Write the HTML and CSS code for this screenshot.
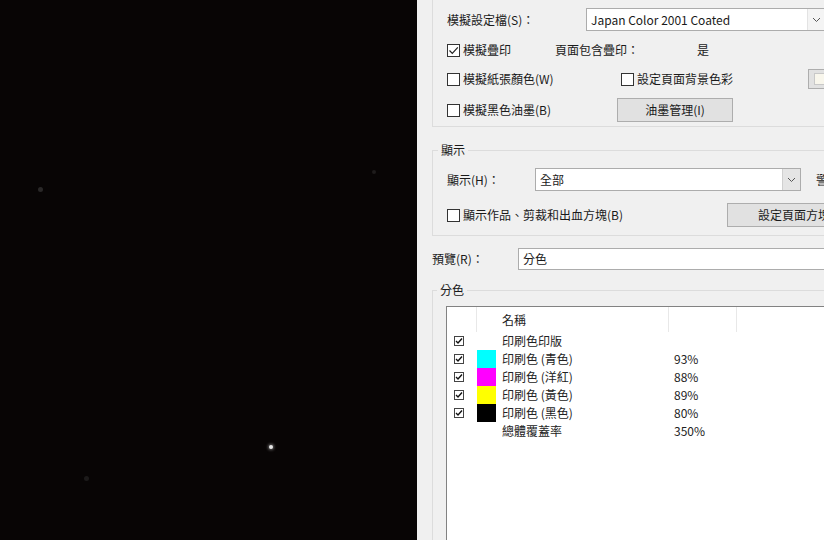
FILE: index.html
```html
<!doctype html>
<html>
  <head>
    <meta charset="utf-8">
    <title>校樣色彩</title>
    <link rel="stylesheet" href="styles.css">
  </head>
  <body>
    <div class="screen">
      <div class="night">
        <span class="star star-bright"></span>
        <span class="star star-a"></span>
        <span class="star star-b"></span>
        <span class="star star-c"></span>
      </div>

      <div class="panel">
        <fieldset class="group group-proof">
          <div class="row row-h23">
            <label class="lbl w139">模擬設定檔(S)：</label>
            <div class="combo combo-profile">
              <span class="combo-text">Japan Color 2001 Coated</span>
              <span class="combo-arrow">
                <svg width="9" height="6" viewBox="0 0 9 6"><path d="M1 1l3.5 3.5L8 1" fill="none" stroke="#555"/></svg>
              </span>
            </div>
          </div>
          <div class="row row-h24 mt7">
            <div class="opt w108">
              <span class="check">
                <svg width="11" height="11" viewBox="0 0 11 11"><path d="M1.5 5.5l2.8 2.8L9.8 2.3" fill="none" stroke="#222" stroke-width="1.2"/></svg>
              </span>
              <span>模擬疊印</span>
            </div>
            <span class="lbl w142">頁面包含疊印：</span>
            <span class="lbl">是</span>
          </div>
          <div class="row row-h24 mt5">
            <div class="opt w174"><span class="check"></span><span>模擬紙張顏色(W)</span></div>
            <div class="opt w187"><span class="check"></span><span>設定頁面背景色彩</span></div>
            <span class="swatch-btn"><span class="swatch-fill"></span></span>
          </div>
          <div class="row row-h24 mt7">
            <div class="opt w170"><span class="check"></span><span>模擬黑色油墨(B)</span></div>
            <button class="btn btn-ink" type="button">油墨管理(I)</button>
          </div>
        </fieldset>

        <fieldset class="group group-show">
          <legend>顯示</legend>
          <div class="row row-h23">
            <label class="lbl w88">顯示(H)：</label>
            <div class="combo combo-show">
              <span class="combo-text">全部</span>
              <span class="combo-arrow arrow-gray">
                <svg width="9" height="6" viewBox="0 0 9 6"><path d="M1 1l3.5 3.5L8 1" fill="none" stroke="#555"/></svg>
              </span>
            </div>
            <span class="lbl warn">警告</span>
          </div>
          <div class="row row-h24 mt12">
            <div class="opt w280"><span class="check"></span><span>顯示作品、剪裁和出血方塊(B)</span></div>
            <button class="btn btn-boxes" type="button">設定頁面方塊</button>
          </div>
        </fieldset>

        <div class="row row-h22 mt12 preview-row">
          <label class="lbl w86">預覽(R)：</label>
          <div class="combo combo-preview"><span class="combo-text">分色</span></div>
        </div>

        <fieldset class="group group-sep">
          <legend>分色</legend>
          <div class="list">
            <div class="list-head">
              <span class="cell sep"></span>
              <span class="cell"></span>
              <span class="cell name sep">名稱</span>
              <span class="cell sep"></span>
              <span class="cell"></span>
            </div>
            <div class="list-row">
              <span class="cell"><span class="mini-check"><svg width="8" height="8" viewBox="0 0 8 8"><path d="M1 4l2 2 4-4.5" fill="none" stroke="#111" stroke-width="1.4"/></svg></span></span>
              <span class="cell"></span>
              <span class="cell name">印刷色印版</span>
              <span class="cell pct"></span>
              <span class="cell"></span>
            </div>
            <div class="list-row">
              <span class="cell"><span class="mini-check"><svg width="8" height="8" viewBox="0 0 8 8"><path d="M1 4l2 2 4-4.5" fill="none" stroke="#111" stroke-width="1.4"/></svg></span></span>
              <span class="cell ink-c"></span>
              <span class="cell name">印刷色 (青色)</span>
              <span class="cell pct">93%</span>
              <span class="cell"></span>
            </div>
            <div class="list-row">
              <span class="cell"><span class="mini-check"><svg width="8" height="8" viewBox="0 0 8 8"><path d="M1 4l2 2 4-4.5" fill="none" stroke="#111" stroke-width="1.4"/></svg></span></span>
              <span class="cell ink-m"></span>
              <span class="cell name">印刷色 (洋紅)</span>
              <span class="cell pct">88%</span>
              <span class="cell"></span>
            </div>
            <div class="list-row">
              <span class="cell"><span class="mini-check"><svg width="8" height="8" viewBox="0 0 8 8"><path d="M1 4l2 2 4-4.5" fill="none" stroke="#111" stroke-width="1.4"/></svg></span></span>
              <span class="cell ink-y"></span>
              <span class="cell name">印刷色 (黃色)</span>
              <span class="cell pct">89%</span>
              <span class="cell"></span>
            </div>
            <div class="list-row">
              <span class="cell"><span class="mini-check"><svg width="8" height="8" viewBox="0 0 8 8"><path d="M1 4l2 2 4-4.5" fill="none" stroke="#111" stroke-width="1.4"/></svg></span></span>
              <span class="cell ink-k"></span>
              <span class="cell name">印刷色 (黑色)</span>
              <span class="cell pct">80%</span>
              <span class="cell"></span>
            </div>
            <div class="list-row">
              <span class="cell"></span>
              <span class="cell"></span>
              <span class="cell name">總體覆蓋率</span>
              <span class="cell pct">350%</span>
              <span class="cell"></span>
            </div>
          </div>
        </fieldset>
      </div>
    </div>
  </body>
</html>
```

FILE: styles.css
```css
* {
  box-sizing: border-box;
}
body {
  margin: 0;
  background: #000;
  font-family: "Noto Sans CJK TC", "Noto Sans", sans-serif;
  font-size: 12px;
  line-height: 16px;
  color: #1a1a1a;
}
.screen {
  display: flex;
  width: 824px;
  height: 540px;
  overflow: hidden;
}

/* dark photo on the left */
.night {
  position: relative;
  width: 417px;
  flex: none;
  background: #080505;
}
.star {
  position: absolute;
  border-radius: 50%;
}
.star-bright {
  left: 269px;
  top: 445px;
  width: 4px;
  height: 4px;
  background: #e8e8e8;
  box-shadow: 0 0 3px 1px rgba(200, 200, 200, 0.5);
}
.star-a {
  left: 38px;
  top: 187px;
  width: 5px;
  height: 5px;
  background: #2a2828;
}
.star-b {
  left: 372px;
  top: 170px;
  width: 4px;
  height: 4px;
  background: #1e1c1c;
}
.star-c {
  left: 84px;
  top: 476px;
  width: 5px;
  height: 5px;
  background: #1c1a1a;
}

/* dialog */
.panel {
  flex: 1;
  background: #f0f0f0;
  padding-left: 15px;
  overflow: hidden;
}
.group {
  width: 520px;
  min-width: 0;
  margin: 0;
  border: 1px solid #dcdcdc;
  padding: 0 14px;
}
.group legend {
  margin-left: -9px;
  padding: 0 3px;
  line-height: 16px;
  color: #1a1a1a;
}
.group-proof {
  margin-top: -21px;
  padding-top: 28px;
  padding-bottom: 4px;
}
.group-show {
  margin-top: 15px;
  padding-top: 10px;
  padding-bottom: 8px;
}
.group-sep {
  margin-top: 12px;
  padding: 8px 0 0 13px;
  height: 300px;
}

.row {
  display: flex;
  align-items: center;
}
.row-h22 { height: 22px; }
.row-h23 { height: 23px; }
.row-h24 { height: 24px; }
.mt5 { margin-top: 5px; }
.mt7 { margin-top: 7px; }
.mt12 { margin-top: 12px; }

.lbl {
  flex: none;
  white-space: nowrap;
}
.w86 { width: 86px; }
.w88 { width: 88px; }
.w108 { width: 108px; }
.w139 { width: 139px; }
.w142 { width: 142px; }
.w170 { width: 170px; }
.w174 { width: 174px; }
.w187 { width: 187px; }
.w280 { width: 280px; }

.opt {
  display: flex;
  align-items: center;
  flex: none;
  white-space: nowrap;
}
.check {
  display: flex;
  align-items: center;
  justify-content: center;
  width: 13px;
  height: 13px;
  margin-right: 3px;
  border: 1px solid #333;
  background: #fff;
}

.combo {
  display: flex;
  flex: none;
  height: 100%;
  background: #fff;
  border: 1px solid #acacac;
}
.combo-text {
  flex: 1;
  padding-left: 4px;
  line-height: 21px;
  white-space: nowrap;
}
.combo-arrow {
  display: flex;
  align-items: center;
  justify-content: center;
  width: 18px;
  border-left: 1px solid #e3e3e3;
  background: #f4f4f4;
}
.arrow-gray {
  background: #e5e5e5;
  border-left-color: #d0d0d0;
}
.combo-profile {
  width: 240px;
}
.combo-show {
  width: 266px;
}
.combo-preview {
  width: 320px;
}
.warn {
  margin-left: 15px;
}
.preview-row .combo-text {
  line-height: 20px;
}

.btn {
  flex: none;
  height: 100%;
  font: inherit;
  color: #1a1a1a;
  background: #e1e1e1;
  border: 1px solid #adadad;
  padding: 0;
}
.btn-ink {
  width: 116px;
}
.btn-boxes {
  width: 134px;
}
.swatch-btn {
  display: flex;
  flex: none;
  width: 40px;
  height: 20px;
  padding: 3px 5px;
  background: #e1e1e1;
  border: 1px solid #adadad;
}
.swatch-fill {
  flex: 1;
  background: #f8f6ec;
  border: 1px solid #c8c8c8;
}

/* separations list */
.list {
  width: 520px;
  height: 300px;
  background: #fff;
  border: 1px solid #828282;
}
.list-head,
.list-row {
  display: grid;
  grid-template-columns: 30px 19px 173px 68px 1fr;
}
.list-head {
  height: 25px;
}
.list-head .cell {
  line-height: 25px;
}
.list-head .sep {
  border-right: 1px solid #e8e8e8;
}
.list-row {
  height: 18px;
}
.cell {
  display: flex;
  align-items: center;
  white-space: nowrap;
  color: #222;
}
.name {
  padding-left: 6px;
}
.pct {
  padding-left: 5px;
}
.mini-check {
  display: flex;
  align-items: center;
  justify-content: center;
  width: 10px;
  height: 10px;
  margin-left: 7px;
  border: 1px solid #444;
}
.ink-c { background: #00ffff; }
.ink-m { background: #ff00ff; }
.ink-y { background: #ffff00; }
.ink-k { background: #000; }
```
